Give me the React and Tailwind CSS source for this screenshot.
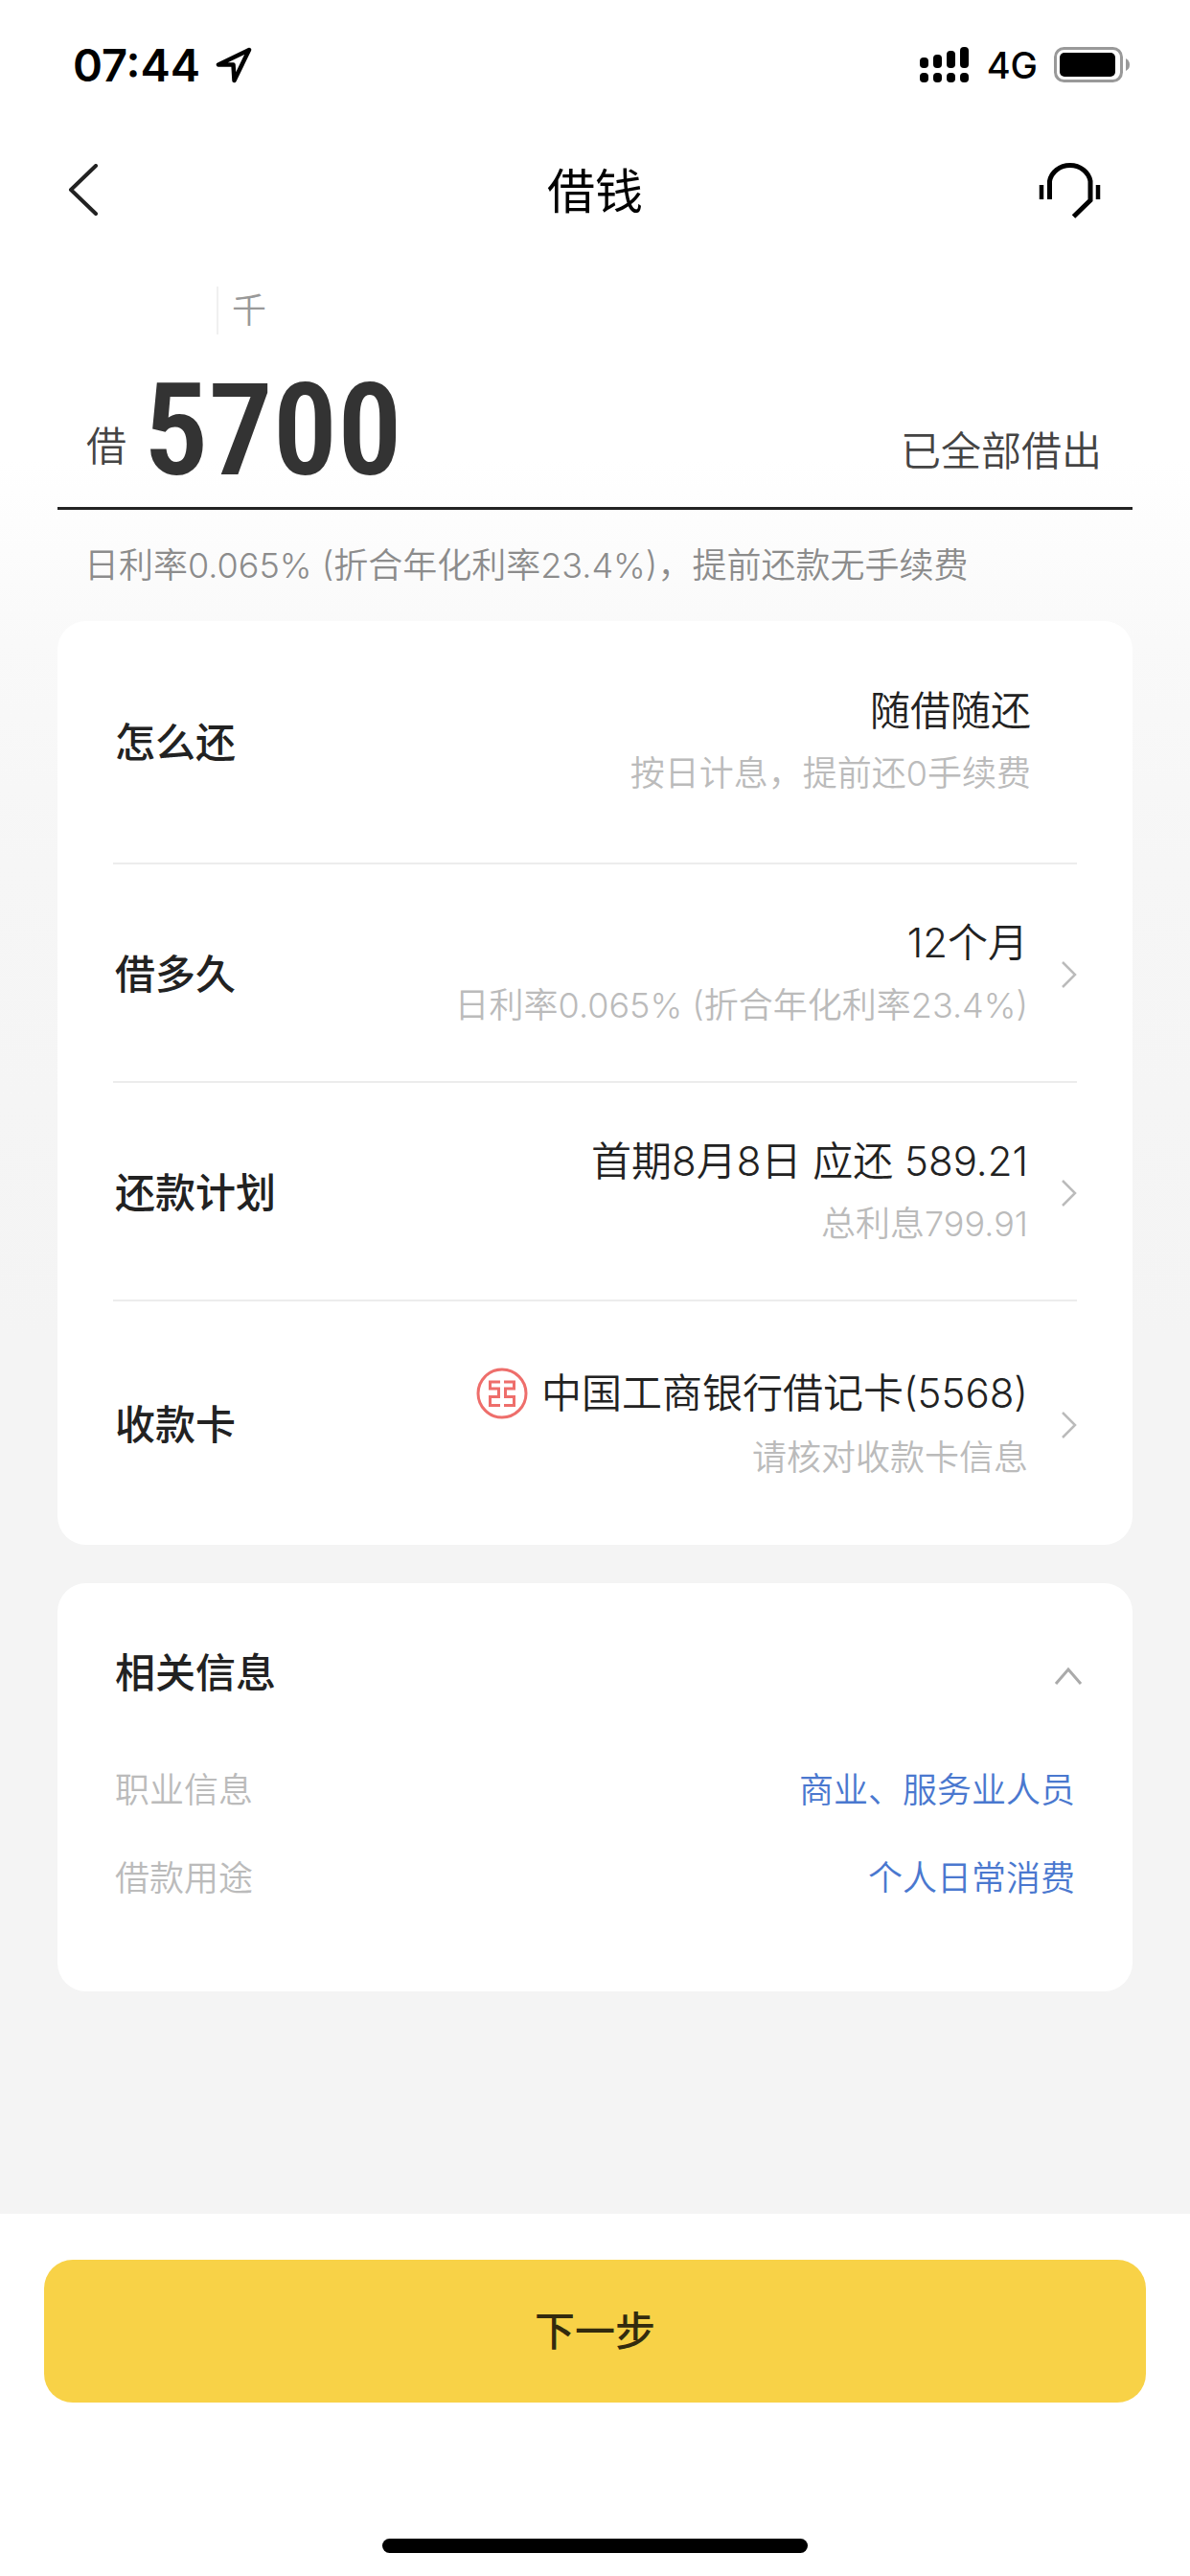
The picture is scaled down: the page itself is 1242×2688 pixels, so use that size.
import { useState } from 'react';
import clsx from 'clsx';

const LOAN_ROWS = [
  {
    label: '怎么还',
    value: '随借随还',
    note: '按日计息，提前还0手续费',
    pad: 'pt-[62px] pb-[60px]',
  },
  {
    label: '借多久',
    value: '12个月',
    note: '日利率0.065% (折合年化利率23.4%)',
    pad: 'pt-[50px] pb-[46px]',
    link: true,
  },
  {
    label: '还款计划',
    value: '首期8月8日 应还 589.21',
    note: '总利息799.91',
    pad: 'pt-[50px] pb-[46px]',
    link: true,
  },
  {
    label: '收款卡',
    value: '中国工商银行借记卡(5568)',
    note: '请核对收款卡信息',
    pad: 'pt-[62px] pb-[58px]',
    link: true,
    bank: true,
  },
];

const INFO_ROWS = [
  { label: '职业信息', value: '商业、服务业人员' },
  { label: '借款用途', value: '个人日常消费' },
];

// heights of the upper signal bars; the lower row is four dots
const SIGNAL_BARS = [11, 14, 18, 22];

function LocationIcon() {
  return (
    <svg width="38" height="38" viewBox="0 0 38 38" fill="none" aria-hidden="true">
      <path
        d="M35 3 L3 18.5 H18.5 L19.5 35 Z"
        stroke="#000"
        strokeWidth="4.5"
        strokeLinejoin="round"
      />
    </svg>
  );
}

function SignalIcon() {
  return (
    <svg width="51" height="38" viewBox="0 0 51 38" aria-hidden="true">
      {SIGNAL_BARS.map((h, i) => (
        <g key={h}>
          <rect x={i * 14} y={22 - h} width="9" height={h} rx="4" />
          <rect x={i * 14} y="27" width="9" height="10" rx="4" />
        </g>
      ))}
    </svg>
  );
}

function BatteryIcon() {
  return (
    <svg width="80" height="38" viewBox="0 0 80 38" aria-hidden="true">
      <rect x="1.5" y="1.5" width="69" height="34" rx="9" fill="none" stroke="#999" strokeWidth="3" />
      <rect x="6" y="6" width="58" height="25" rx="5" />
      <path d="M75 12 Q79 14 79 18.5 T75 25 Z" fill="#999" />
    </svg>
  );
}

function BackIcon() {
  return (
    <svg width="34" height="56" viewBox="0 0 34 56" fill="none" aria-hidden="true">
      <path d="M30 2 L4 27 L30 52" stroke="#222" strokeWidth="4" strokeLinecap="round" strokeLinejoin="round" />
    </svg>
  );
}

function HeadsetIcon() {
  return (
    <svg width="66" height="64" viewBox="0 0 66 64" fill="none" stroke="#000" aria-hidden="true">
      <path d="M11.5 41 V22 A21.5 19.5 0 0 1 54 22 V42 L36.5 59" strokeWidth="5" />
      <path d="M3 26 V41 M62 26 V41" strokeWidth="4.5" />
    </svg>
  );
}

function ChevronIcon() {
  return (
    <svg width="17" height="28" viewBox="0 0 17 28" fill="none" aria-hidden="true">
      <path d="M2 1 L15 14 L2 27" stroke="#bbb" strokeWidth="2.5" />
    </svg>
  );
}

function BankIcon() {
  return (
    <svg width="54" height="54" viewBox="0 0 54 54" fill="none" stroke="#ee6e6b" aria-hidden="true">
      <circle cx="27" cy="27" r="25" strokeWidth="3" />
      <g strokeWidth="3">
        <path d="M25 15 H14.5 V22 H23.5 V30.5 H14.5 V39.5 H25" />
        <path d="M29 15 H39.5 V22 H30.5 V30.5 H39.5 V39.5 H29" />
      </g>
    </svg>
  );
}

function StatusBar() {
  return (
    <div className="flex h-[98px] items-end justify-between pl-[76px] pr-[62px]">
      <div className="flex h-[60px] items-center gap-4">
        <span className="text-[47px] leading-[60px] font-semibold text-black">07:44</span>
        <LocationIcon />
      </div>
      <div className="flex h-[60px] items-center">
        <SignalIcon />
        <span className="ml-[19px] text-[38px] leading-[60px] font-medium text-black">4G</span>
        <span className="ml-[17px]">
          <BatteryIcon />
        </span>
      </div>
    </div>
  );
}

function LoanRow({ row, last }) {
  return (
    <button
      type="button"
      className={clsx(
        'flex w-full items-center border-[#ececec] text-left',
        row.pad,
        !last && 'border-b-2'
      )}
    >
      <span className="shrink-0 pl-0.5 text-[42px] leading-[64px] font-medium">{row.label}</span>
      <span className={clsx('flex flex-1 flex-col items-end', row.link ? 'pr-[34px]' : 'pr-[48px]')}>
        <span
          className={clsx(
            'flex items-center gap-3.5 text-[42px] font-[350]',
            row.bank ? 'leading-[68px]' : 'leading-[64px]'
          )}
        >
          {row.bank && <BankIcon />}
          {row.value}
        </span>
        <span className="text-[36px] leading-[66px] font-[350] text-[#bbb]">{row.note}</span>
      </span>
      {row.link && <ChevronIcon />}
    </button>
  );
}

export default function App() {
  const [amount, setAmount] = useState('5700');
  const [open, setOpen] = useState(true);

  return (
    <div className="flex min-h-screen flex-col bg-[linear-gradient(#fff_480px,#f9f9f9_670px,#f6f6f6_900px,#f4f4f4_1400px)] font-['Inter','Noto_Sans_CJK_SC',sans-serif] text-[#222]">
      <StatusBar />

      <header className="mt-[51px] grid h-[100px] grid-cols-3 items-center pl-[70px] pr-[92px]">
        <button type="button" aria-label="返回" className="justify-self-start">
          <BackIcon />
        </button>
        <h1 className="pt-0.5 pl-[22px] text-center text-[50px] leading-[70px] text-black">借钱</h1>
        <button type="button" aria-label="客服" className="justify-self-end">
          <HeadsetIcon />
        </button>
      </header>

      <main className="flex-1 px-[60px]">
        {/* Amount */}
        <div className="mt-[50px] ml-[166px] border-l-2 border-[#f0f0f0] pl-3.5 text-[36px] leading-[50px] font-[350] text-[#999]">
          千
        </div>
        <div className="flex h-[183px] items-end border-b-3 border-[#222] pr-[32px] pl-[30px]">
          <label htmlFor="amount" className="pb-[33px] text-[42px] leading-[60px] font-[350] text-[#444]">
            借
          </label>
          <input
            id="amount"
            inputMode="numeric"
            value={amount}
            onChange={(e) => setAmount(e.target.value)}
            className="mb-[20px] ml-[18px] h-[120px] min-w-0 flex-1 bg-transparent font-['Roboto_Condensed','Liberation_Sans_Narrow','Roboto',sans-serif] text-[134px] leading-[120px] font-semibold text-[#333] outline-none"
          />
          <span className="pb-[28px] text-[42px] leading-[60px] font-[350] text-[#444]">已全部借出</span>
        </div>
        <p className="py-[33px] pl-[28px] text-[36px] leading-[50px] font-[350] text-[#8c8c8c]">
          日利率0.065% (折合年化利率23.4%)，提前还款无手续费
        </p>

        {/* Loan terms */}
        <section className="rounded-[30px] bg-white px-[58px]">
          {LOAN_ROWS.map((row, i) => (
            <LoanRow key={row.label} row={row} last={i === LOAN_ROWS.length - 1} />
          ))}
        </section>

        {/* Related info */}
        <section className="mt-10 rounded-[30px] bg-white px-[60px] pt-[62px] pb-[72px]">
          <button
            type="button"
            onClick={() => setOpen(!open)}
            aria-expanded={open}
            className="flex w-full items-center justify-between"
          >
            <span className="text-[42px] leading-[64px] font-medium">相关信息</span>
            <svg
              width="30"
              height="18"
              viewBox="0 0 30 18"
              fill="none"
              className={clsx('mt-1.5 -mr-2', !open && 'rotate-180')}
              aria-hidden="true"
            >
              <path d="M2 17 L15 2 L28 17" stroke="#aaa" strokeWidth="3" />
            </svg>
          </button>
          {open && (
            <dl className="mt-[44px]">
              {INFO_ROWS.map((row) => (
                <div key={row.label} className="flex justify-between text-[36px] leading-[92px] font-[350]">
                  <dt className="text-[#bbb]">{row.label}</dt>
                  <dd className="text-[#4a78cf]">{row.value}</dd>
                </div>
              ))}
            </dl>
          )}
        </section>
      </main>

      <footer className="flex flex-col items-center bg-white px-[46px] pt-[48px] pb-6">
        <button
          type="button"
          className="h-[149px] w-full rounded-[30px] bg-[#f8d247] text-[42px] font-medium text-[#332b0e]"
        >
          下一步
        </button>
        <div className="mt-[142px] h-[15px] w-[444px] rounded-full bg-black" />
      </footer>
    </div>
  );
}
